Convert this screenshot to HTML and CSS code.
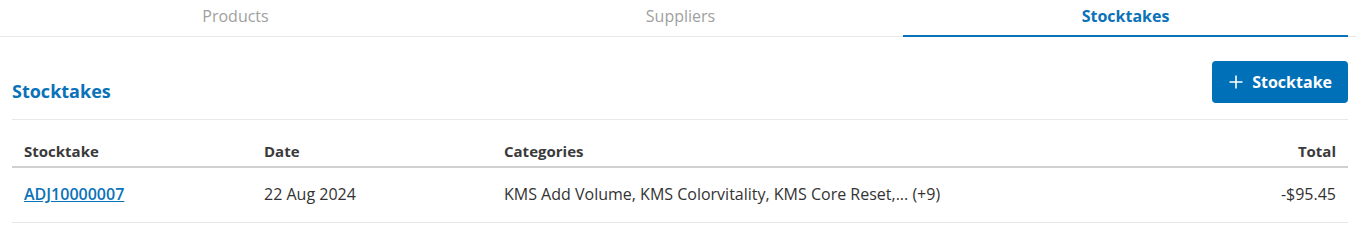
FILE: index.html
```html
<!DOCTYPE html>
<html>
<head>
<meta charset="utf-8">
<link rel="stylesheet" href="styles.css">
</head>
<body>
<nav class="tabs">
  <div class="tab-list">
    <a class="tab">Products</a>
    <a class="tab">Suppliers</a>
    <a class="tab active">Stocktakes</a>
  </div>
</nav>
<main class="content">
  <div class="header">
    <h2 class="title">Stocktakes</h2>
    <button class="btn"><svg class="plus" width="14" height="14" viewBox="0 0 14 14"><path d="M7 0.5V13.5M0.5 7H13.5" stroke="#fff" stroke-width="1.6" fill="none"/></svg><span>Stocktake</span></button>
  </div>
  <table class="grid">
    <thead>
      <tr><th>Stocktake</th><th>Date</th><th>Categories</th><th class="num">Total</th></tr>
    </thead>
    <tbody>
      <tr><td><a class="link" href="#">ADJ10000007</a></td><td>22 Aug 2024</td><td>KMS Add Volume, KMS Colorvitality, KMS Core Reset,... (+9)</td><td class="num">-$95.45</td></tr>
    </tbody>
  </table>
</main>
</body>
</html>
```
FILE: styles.css
```css
* { box-sizing: border-box; }
body {
  margin: 0;
  font-family: "Open Sans", "Liberation Sans", sans-serif;
  color: #333;
  background: #fff;
}
.tabs {
  border-bottom: 1px solid #e8e8e8;
  padding: 0 8px 0 13px;
}
.tab-list {
  display: flex;
}
.tab {
  flex: 1;
  text-align: center;
  font-size: 16px;
  line-height: 22px;
  padding: 5px 0 8px;
  color: #a0a0a0;
  margin-bottom: -1px;
  border-bottom: 2px solid transparent;
}
.tab.active {
  color: #0a72b8;
  font-weight: 700;
  border-bottom-color: #0a72b8;
}
.content {
  padding: 0 8px 0 12px;
}
.header {
  display: flex;
  justify-content: space-between;
  align-items: center;
  padding: 23px 0 16px;
  border-bottom: 1px solid #e8e8e8;
}
.title {
  margin: 0;
  font-size: 18px;
  font-weight: 700;
  color: #0a72b8;
  padding-top: 19px;
}
.btn {
  display: flex;
  align-items: center;
  gap: 9px;
  height: 42px;
  padding: 0 16px 0 17px;
  background: #0070b9;
  color: #fff;
  border: none;
  border-radius: 4px;
  font-family: inherit;
  font-size: 16px;
  font-weight: 700;
}
.grid {
  width: 100%;
  border-collapse: collapse;
  font-size: 16px;
}
.grid th {
  text-align: left;
  font-size: 15px;
  font-weight: 700;
  color: #3a3a3a;
  padding: 21px 12px 5px;
  border-bottom: 2px solid #d0d0d0;
  width: 240px;
  line-height: 20px;
}
.grid th:nth-child(3) { width: auto; }
.grid td {
  padding: 15px 12px 17px;
  line-height: 22px;
  border-bottom: 1px solid #e8e8e8;
  color: #333;
}
.grid .num { text-align: right; }
.link {
  color: #0a72b8;
  font-weight: 600;
  text-decoration: underline;
}
```
